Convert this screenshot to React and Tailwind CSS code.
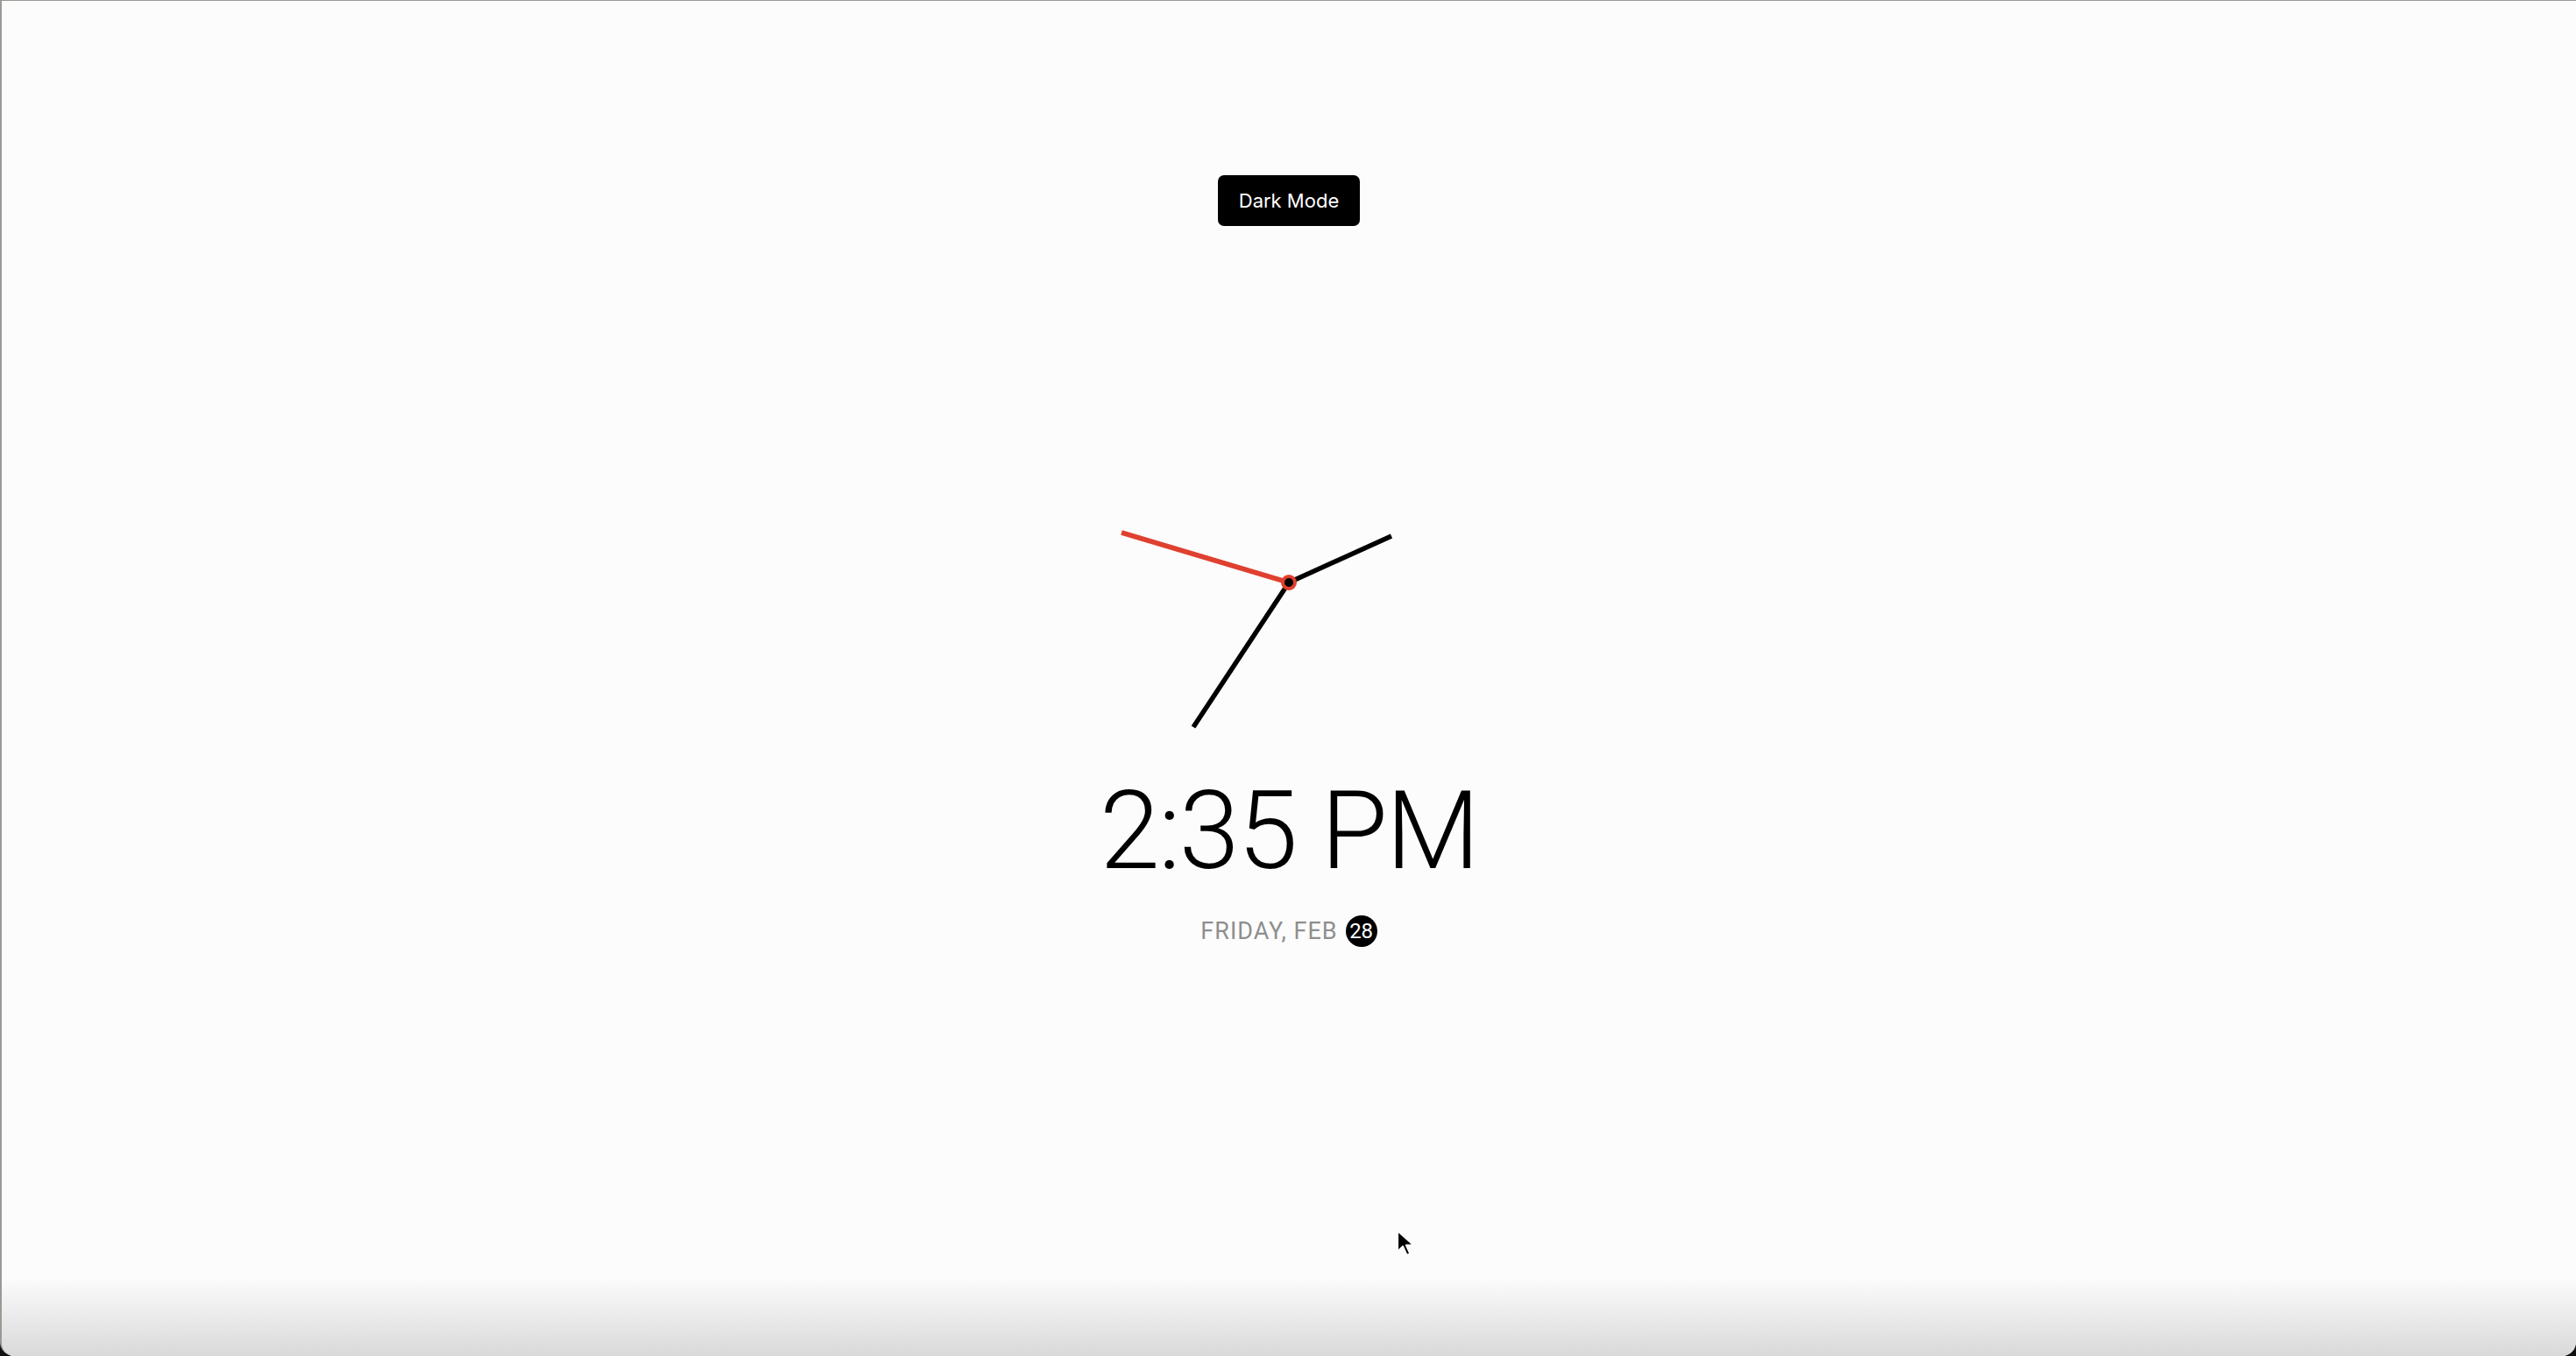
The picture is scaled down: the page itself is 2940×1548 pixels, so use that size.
import React from "react";

function Clock() {
  const cx = 220;
  const cy = 200;
  return (
    <svg width="440" height="400" viewBox="0 0 440 400" className="block">
      {/* minute hand */}
      <line x1={cx} y1={cy} x2={cx - 109} y2={cy + 165} stroke="#000" strokeWidth="5.5" />
      {/* hour hand */}
      <line x1={cx} y1={cy} x2={cx + 117} y2={cy - 53} stroke="#000" strokeWidth="5.5" />
      {/* second hand */}
      <line x1={cx} y1={cy} x2={cx - 191} y2={cy - 57} stroke="#e0402f" strokeWidth="5.5" />
      <circle cx={cx} cy={cy} r="9" fill="#e0402f" />
      <circle cx={cx} cy={cy} r="5" fill="#000" />
    </svg>
  );
}

function Cursor() {
  return (
    <svg
      width="26"
      height="36"
      viewBox="0 0 26 36"
      className="absolute left-[1592px] top-[1402px]"
    >
      <path
        d="M3 3 L3 27 L9 21 L13.5 31 L17.5 29.2 L13 19.5 L21.5 19.5 Z"
        fill="#000"
        stroke="#fff"
        strokeWidth="2.2"
        strokeLinejoin="round"
      />
    </svg>
  );
}

export default function App() {
  return (
    <div className="relative w-[2940px] h-[1548px] overflow-hidden bg-[#111]">
      <div
        className="relative w-full h-full rounded-b-[16px] bg-[#fcfcfc] border-t border-l-2 border-[#9a9a94] flex flex-col items-center overflow-hidden"
        style={{ fontFamily: "Roboto, 'Liberation Sans', sans-serif" }}
      >
        <button
          className="mt-[199px] w-[162px] h-[58px] rounded-[7px] bg-black text-white text-[22px] flex items-center justify-center"
          style={{ fontFamily: "Inter, 'Liberation Sans', sans-serif" }}
        >
          Dark Mode
        </button>

        <div className="mt-[207px]">
          <Clock />
        </div>

        <div className="mt-[22px] text-[124px] leading-none font-light text-black tracking-[-2px]">
          2:35 PM
        </div>

        <div className="mt-[34px] flex items-center gap-[9px]">
          <span className="text-[27px] leading-none text-[#8e8e8e] tracking-[1px]">
            FRIDAY, FEB
          </span>
          <span className="w-[36px] h-[36px] rounded-full bg-black text-white text-[24px] leading-none flex items-center justify-center">
            28
          </span>
        </div>

        <div className="absolute left-0 right-0 bottom-0 h-[90px] bg-gradient-to-b from-[#fcfcfc00] to-[#d9d9d9]" />
      </div>
      <Cursor />
    </div>
  );
}
